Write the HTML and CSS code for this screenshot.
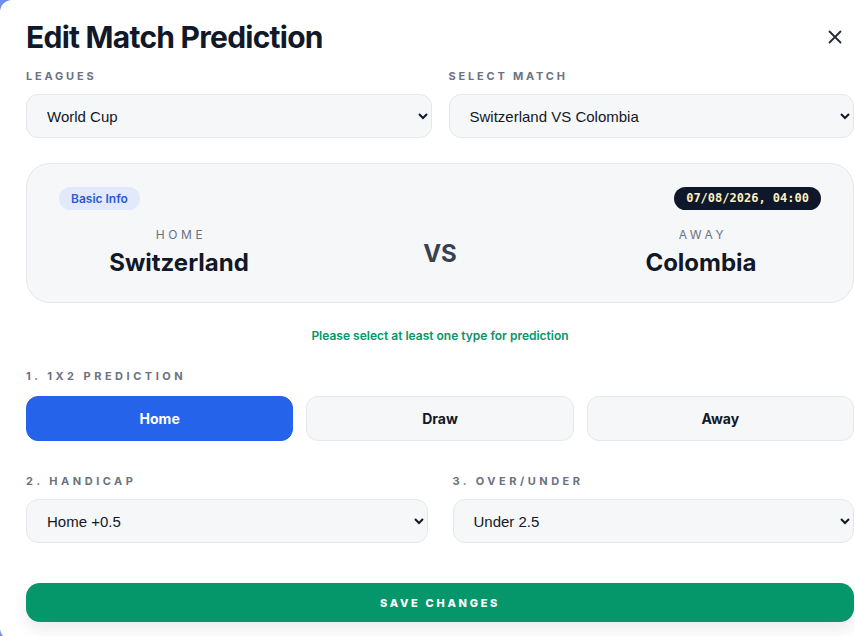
FILE: index.html
```html
<!DOCTYPE html>
<html lang="en">
<head>
    <meta charset="UTF-8">
    <meta name="viewport" content="width=device-width, initial-scale=1.0">
    <title>Edit Match Prediction</title>
    <link rel="stylesheet" href="styles.css">
</head>
<body>
    <div class="modal">
        <div class="modal-header">
            <h1>Edit Match Prediction</h1>
            <button class="close-btn" aria-label="Close">
                <svg width="14" height="14" viewBox="0 0 14 14"><path d="M1.5 1.5 L12.5 12.5 M12.5 1.5 L1.5 12.5" stroke="#1f2937" stroke-width="1.8" stroke-linecap="round" fill="none"/></svg>
            </button>
        </div>

        <div class="two-col">
            <div class="field">
                <label class="field-label">Leagues</label>
                <select class="field-select">
                    <option>World Cup</option>
                </select>
            </div>
            <div class="field">
                <label class="field-label">Select Match</label>
                <select class="field-select">
                    <option>Switzerland VS Colombia</option>
                </select>
            </div>
        </div>

        <div class="match-card">
            <div class="match-top">
                <span class="badge-info">Basic Info</span>
                <span class="badge-date">07/08/2026, 04:00</span>
            </div>
            <div class="teams">
                <div class="team">
                    <div class="team-side">Home</div>
                    <div class="team-name">Switzerland</div>
                </div>
                <div class="vs">VS</div>
                <div class="team">
                    <div class="team-side">Away</div>
                    <div class="team-name">Colombia</div>
                </div>
            </div>
        </div>

        <p class="notice">Please select at least one type for prediction</p>

        <div class="section">
            <label class="field-label step-label">1. 1x2 Prediction</label>
            <div class="choice-row">
                <button class="choice active">Home</button>
                <button class="choice">Draw</button>
                <button class="choice">Away</button>
            </div>
        </div>

        <div class="two-col wide-gap section-lower">
            <div class="field">
                <label class="field-label step-label">2. Handicap</label>
                <select class="field-select">
                    <option>Home +0.5</option>
                </select>
            </div>
            <div class="field">
                <label class="field-label step-label">3. Over/Under</label>
                <select class="field-select">
                    <option>Under 2.5</option>
                </select>
            </div>
        </div>

        <button class="save-btn">Save Changes</button>
    </div>
</body>
</html>
```

FILE: styles.css
```css
body {
    margin: 0;
    padding: 0;
    background-color: #6f8fe8;
    font-family: 'Inter', 'Noto Sans', sans-serif;
    color: #111827;
    overflow: hidden;
}
.modal {
    box-sizing: border-box;
    width: 880px;
    height: 640px;
    background-color: #ffffff;
    border-radius: 12px;
    padding: 18px 26px;
}
.modal-header {
    display: flex;
    justify-content: space-between;
    align-items: center;
}
.modal-header h1 {
    margin: 0;
    font-size: 30px;
    line-height: 38px;
    font-weight: 700;
    letter-spacing: -0.75px;
    color: #111827;
}
.close-btn {
    border: none;
    background: none;
    padding: 0;
    margin-right: 12px;
    width: 14px;
    height: 14px;
    display: flex;
}
.two-col {
    display: grid;
    grid-template-columns: 1fr 1fr;
    gap: 17px;
    margin-top: 12px;
}
.two-col.wide-gap {
    gap: 25px;
}
.field {
    display: flex;
    flex-direction: column;
}
.field-label {
    display: block;
    font-size: 11px;
    line-height: 16px;
    font-weight: 700;
    letter-spacing: 2.8px;
    text-transform: uppercase;
    color: #6b7280;
    margin-bottom: 10px;
}
.step-label {
    letter-spacing: 3.5px;
}
.field-select {
    height: 44px;
    box-sizing: border-box;
    background-color: #f6f7f9;
    border: 1px solid #e5e7eb;
    border-radius: 12px;
    padding: 0 10px 0 16px;
    font-family: 'Liberation Sans', Arial, sans-serif;
    font-size: 15px;
    color: #111827;
}
.match-card {
    margin-top: 25px;
    height: 140px;
    box-sizing: border-box;
    background-color: #f6f7f9;
    border: 1px solid #e5e7eb;
    border-radius: 24px;
    padding: 23px 32px 0;
}
.match-top {
    display: flex;
    justify-content: space-between;
    align-items: center;
}
.badge-info {
    background-color: #e1e9fb;
    color: #2b59d6;
    font-size: 12px;
    font-weight: 600;
    line-height: 23px;
    padding: 0 12px;
    border-radius: 12px;
}
.badge-date {
    background-color: #0f172a;
    color: #fdf0c4;
    font-family: 'DejaVu Sans Mono', monospace;
    font-size: 12px;
    font-weight: 700;
    line-height: 23px;
    padding: 0 12px;
    border-radius: 12px;
}
.teams {
    display: flex;
    justify-content: space-between;
    align-items: center;
    margin-top: 18px;
}
.team {
    width: 240px;
    text-align: center;
}
.team-side {
    font-size: 12px;
    line-height: 14px;
    letter-spacing: 3.6px;
    text-transform: uppercase;
    color: #6b7280;
    padding-left: 4px;
}
.team-name {
    font-size: 24px;
    line-height: 32px;
    font-weight: 700;
    color: #111827;
    margin-top: 5px;
}
.vs {
    font-size: 24px;
    font-weight: 700;
    color: #374151;
}
.notice {
    margin: 25px 0 0;
    text-align: center;
    font-size: 12px;
    line-height: 16px;
    font-weight: 600;
    color: #059669;
}
.section {
    margin-top: 24px;
}
.section .field-label {
    margin-bottom: 12px;
}
.choice-row {
    display: grid;
    grid-template-columns: 1fr 1fr 1fr;
    gap: 13px;
}
.choice {
    height: 45px;
    background-color: #f6f7f9;
    border: 1px solid #e5e7eb;
    border-radius: 12px;
    font-family: 'Inter', sans-serif;
    font-size: 14px;
    font-weight: 700;
    color: #111827;
}
.choice.active {
    background-color: #2563eb;
    border-color: #2563eb;
    color: #ffffff;
}
.section-lower {
    margin-top: 32px;
}
.save-btn {
    display: block;
    width: 100%;
    height: 39px;
    margin-top: 40px;
    background-color: #059669;
    border: none;
    border-radius: 14px;
    color: #ffffff;
    font-family: 'Inter', sans-serif;
    font-size: 11px;
    font-weight: 800;
    letter-spacing: 2.7px;
    text-transform: uppercase;
    box-shadow: 0 8px 16px rgba(0, 0, 0, 0.08);
}
```
